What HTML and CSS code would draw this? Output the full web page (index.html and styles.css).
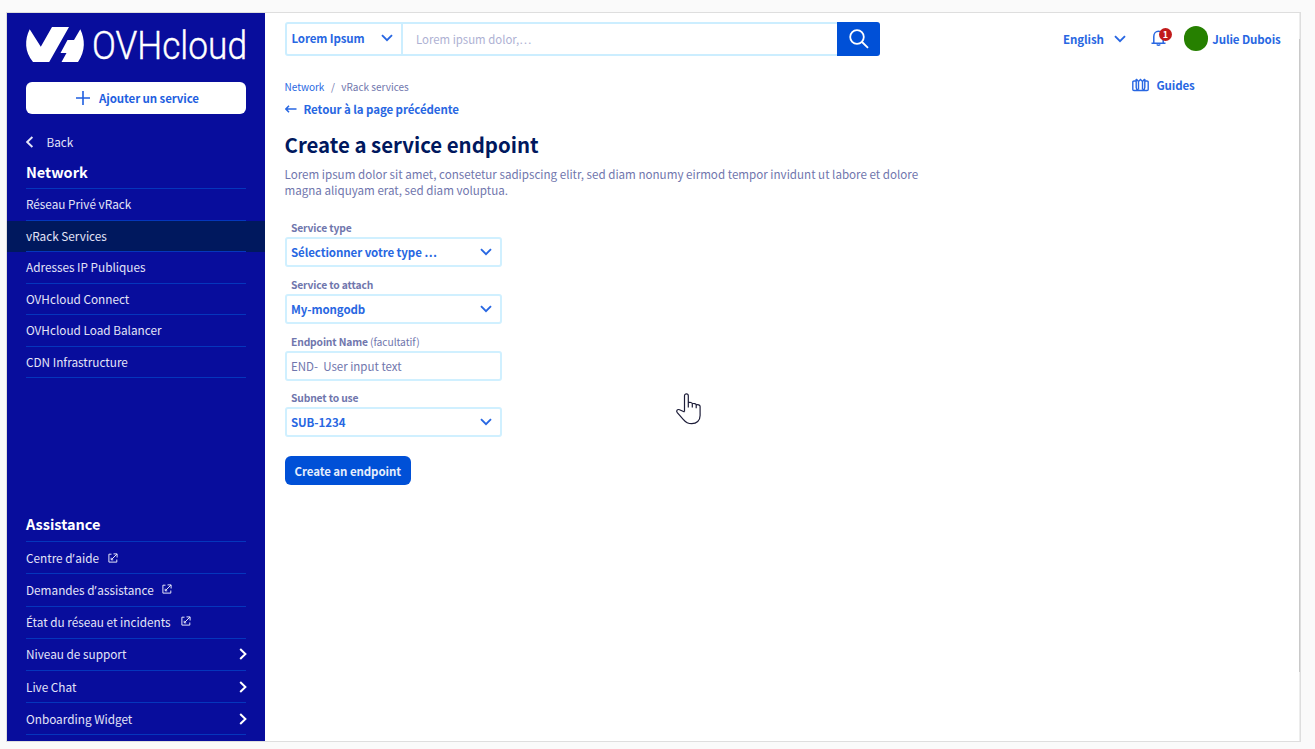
FILE: index.html
```html
<!DOCTYPE html>
<html lang="fr">
<head>
<meta charset="utf-8">
<title>OVHcloud - vRack services</title>
<link rel="stylesheet" href="styles.css">
</head>
<body>
<svg class="defs" width="0" height="0">
  <symbol id="chevron-down" viewBox="0 0 12 8"><path d="M1 1.2 6 6.2 11 1.2"/></symbol>
  <symbol id="chevron-right" viewBox="0 0 8 12"><path d="M1.2 1 6.4 6 1.2 11"/></symbol>
  <symbol id="external" viewBox="0 0 10 10"><path d="M3.500 1.200H.9v7.900h7.900V6.500M5.500 .9h3.600v3.600M9 1 3.400 6.600M3.200 4.800v2h2"/></symbol>
</svg>
<div class="frame">
  <aside class="sidebar">
    <svg class="logo" width="230" height="40" viewBox="0 0 230 40">
      <path class="mark" d="M3.700 5.300 14.800 22.800 26 3H43L23.200 38H7C-1.500 28-1.500 15.500 3.700 5.300ZM54.300 5.300C59 15 59.800 27 52 38H35.500L40.500 29H34.500L41.500 16H48Z"/>
      <text class="wordmark" x="66" y="35" textLength="155" lengthAdjust="spacingAndGlyphs">OVHcloud</text>
    </svg>
    <button class="add"><svg width="14" height="14" viewBox="0 0 14 14"><path d="M7 0v14M0 7h14"/></svg><span>Ajouter un service</span></button>
    <a class="back"><svg width="8" height="12" viewBox="0 0 8 12"><path d="M6.400 1 1.200 6l5.200 5"/></svg><span>Back</span></a>
    <h2 class="group-title">Network</h2>
    <ul class="menu">
      <li>Réseau Privé vRack</li>
      <li class="active">vRack Services</li>
      <li>Adresses IP Publiques</li>
      <li>OVHcloud Connect</li>
      <li>OVHcloud Load Balancer</li>
      <li>CDN Infrastructure</li>
    </ul>
    <h2 class="group-title assist-title">Assistance</h2>
    <ul class="menu assist">
      <li><span>Centre d<span class="apos">’</span>aide</span><svg class="ext"><use href="#external"/></svg></li>
      <li><span>Demandes d<span class="apos">’</span>assistance</span><svg class="ext raised"><use href="#external"/></svg></li>
      <li><span>État du réseau et incidents</span><svg class="ext raised wide"><use href="#external"/></svg></li>
      <li>Niveau de support<svg class="go"><use href="#chevron-right"/></svg></li>
      <li>Live Chat<svg class="go"><use href="#chevron-right"/></svg></li>
      <li>Onboarding Widget<svg class="go"><use href="#chevron-right"/></svg></li>
    </ul>
  </aside>
  <main class="main">
    <header class="topbar">
      <div class="search">
        <div class="scope"><span>Lorem Ipsum</span><svg class="down"><use href="#chevron-down"/></svg></div>
        <div class="query">Lorem ipsum dolor,…</div>
        <button class="go-search"><svg width="20" height="20" viewBox="0 0 20 20"><circle cx="8" cy="8" r="6.800"/><path d="m13 13 6 5.800"/></svg></button>
      </div>
      <div class="lang"><span>English</span><svg class="down"><use href="#chevron-down"/></svg></div>
      <div class="bell">
        <svg width="16" height="18" viewBox="0 0 16 18"><path d="M.5 14.300h14M2.800 14V7.500c0-3 2-5.200 4.700-5.200s4.700 2.200 4.700 5.200V14M5.700 15.500q1.800 1.600 3.600 0"/></svg>
        <span class="badge">1</span>
      </div>
      <div class="user"><span class="avatar"></span><span class="user-name">Julie Dubois</span></div>
    </header>
    <div class="crumb-row">
      <nav class="crumbs"><a>Network</a><span>/</span><span>vRack services</span></nav>
      <a class="guides"><svg width="17" height="14" viewBox="0 0 17 14"><path d="M4 3H2q-1.200 0-1.200 1v7.500q0 1 1.200 1h13q1.200 0 1.200-1V4q0-1-1.200-1h-2M4.200 1v8.500q0 2 2 2.500M12.800 1v8.500q0 2-2 2.500M4.200 1l2.300 2.500L8.500 1.500l2 2L12.800 1M6.500 3.500v8M10.500 3.500v8"/></svg><span>Guides</span></a>
    </div>
    <a class="return"><svg width="12" height="8" viewBox="0 0 12 8"><path d="M11.500 4H1M4 .8.900 4 4 7.200"/></svg><span>Retour à la page précédente</span></a>
    <h1>Create a service endpoint</h1>
    <p class="intro"><span>Lorem ipsum dolor sit amet, consetetur sadipscing elitr, sed diam nonumy eirmod tempor invidunt ut labore et dolore</span><br><span>magna aliquyam erat, sed diam voluptua.</span></p>
    <form class="form">
      <label>Service type</label>
      <div class="field"><span>Sélectionner votre type …</span><svg class="down"><use href="#chevron-down"/></svg></div>
      <label>Service to attach</label>
      <div class="field"><span>My-mongodb</span><svg class="down"><use href="#chevron-down"/></svg></div>
      <label>Endpoint Name <small>(facultatif)</small></label>
      <div class="field input"><span>END-&nbsp; User input text</span></div>
      <label>Subnet to use</label>
      <div class="field"><span>SUB-1234</span><svg class="down"><use href="#chevron-down"/></svg></div>
      <button type="button" class="submit">Create an endpoint</button>
    </form>
  </main>
  <div class="scroll"><div class="thumb"></div></div>
</div>
<svg class="pointer" width="28" height="34" viewBox="0 0 28 34"><path d="M10.500 19.500V3.800c0-2.600 3.800-2.600 3.800 0v11.600M14.300 10.600c1.500-.6 4-.2 4 1.300v3.600M18.300 11.800c1.400-.6 3.900-.2 3.900 1.300v3.200M22.200 13c1.500-.7 3.900-.2 3.900 1.500v9c0 5-3.500 8.200-8.300 8.200-4 0-6.300-1.600-8.600-4.400L3.300 20.700c-1.600-2.300.2-3.800 2.300-2.900l4.900 2.200"/></svg>
</body>
</html>
```
FILE: styles.css
```css
* { box-sizing: border-box; }
body {
  margin: 0;
  height: 749px;
  padding: 12px 14px 8px 6px;
  overflow: hidden;
  background: #fafafa;
  font-family: "Noto Sans CJK SC", "Noto Sans", sans-serif;
  font-size: 11.6px;
  line-height: 16px;
}
svg { fill: none; stroke: currentColor; flex: none; }
.defs { position: absolute; }
h1, h2, p, ul { margin: 0; padding: 0; }
button { font: inherit; border: 0; padding: 0; }
.frame {
  display: flex;
  height: 730px;
  border: 1px solid #dedede;
  background: #fff;
}
.sidebar {
  width: 258px;
  padding: 11px 19px 0;
  background: #080d9c;
  color: #e4e5f8;
  font-size: 11.78px;
}
.logo { display: block; overflow: visible; }
.mark { fill: #fff; stroke: none; }
.wordmark { fill: #fff; stroke: #fff; stroke-width: .4; font: 300 38px Roboto, sans-serif; }
.add {
  display: flex;
  align-items: center;
  justify-content: center;
  gap: 9px;
  width: 220px;
  height: 32px;
  margin-top: 18px;
  padding-left: 3px;
  border-radius: 6px;
  background: #fff;
  color: #1f5fe0;
  font-size: 11.5px;
  font-weight: 600;
  letter-spacing: -.1px;
}
.add svg { stroke-width: 1.6; }
.back { display: flex; align-items: center; gap: 12.5px; margin-top: 20px; }
.back svg { stroke-width: 1.9; }
.group-title { margin-top: 13px; height: 25px; line-height: 18px; font-size: 14.5px; font-weight: 700; color: #fff; }
.menu { list-style: none; border-top: 1px solid #0536bc; }
.menu li {
  display: flex;
  align-items: center;
  height: 31.55px;
  border-bottom: 1px solid #0536bc;
}
.apos { font-family: "Open Sans", sans-serif; padding-right: .8px; }
.menu .active { margin: 0 -19px; padding: 0 19px; background: #00185e; border: 0; position: relative; }
.menu .active::after { content: ""; position: absolute; left: 19px; right: 19px; bottom: 0; border-bottom: 1px solid #0536bc; }
.assist-title { margin-top: 137px; height: 26px; }
.assist li { height: 32.2px; }
.ext { width: 10px; height: 10px; margin-left: 8.5px; }
.raised { margin-top: -3px; }
.wide { margin-left: 10.5px; }
.go { width: 8px; height: 12px; margin-left: auto; margin-right: -1px; stroke-width: 2; color: #fff; }
.down { width: 12px; height: 8px; stroke-width: 1.9; }
.main { flex: 1; padding: 8.5px 18px 0 19.5px; color: #7076ad; }
.topbar { display: flex; align-items: center; height: 34px; color: #2867e2; font-size: 11.5px; font-weight: 600; letter-spacing: -.1px; }
.search { display: flex; width: 595.5px; height: 34px; }
.scope {
  display: flex;
  align-items: center;
  justify-content: space-between;
  width: 118.5px;
  padding: 0 8.5px 2px 5px;
  border: 2px solid #cceeff;
  border-radius: 3px 0 0 3px;
}
.query {
  width: 434px;
  padding: 7px 13px;
  border: solid #cceeff;
  border-width: 2px 0;
  font-size: 11.4px;
  font-weight: 400;
  letter-spacing: 0;
  color: #aeb1d3;
}
.go-search { flex: 1; padding-top: 4px; border-radius: 0 3px 3px 0; background: #0050d7; color: #fff; }
.go-search svg { stroke-width: 1.8; }
.lang { display: flex; align-items: center; gap: 10px; margin-left: 183px; }
.bell { position: relative; width: 22px; height: 20px; margin-left: 25px; }
.bell svg { stroke-width: 1.5; }
.badge {
  position: absolute;
  left: 8px;
  top: -1px;
  width: 13px;
  height: 13px;
  border-radius: 50%;
  background: #c11b1b;
  color: #fff;
  font-size: 9px;
  line-height: 13px;
  text-align: center;
}
.user { display: flex; align-items: center; gap: 4px; margin-left: 11px; white-space: nowrap; }
.avatar { width: 24.5px; height: 24.5px; border-radius: 50%; background: #268000; }
.crumb-row { display: flex; justify-content: space-between; height: 18px; margin-top: 22px; }
.crumbs { display: flex; gap: 6.5px; padding-top: 1px; font-size: 10px; }
.crumbs a { color: #2867e2; }
.guides { display: flex; align-items: center; align-self: flex-start; gap: 7px; margin: -1px 86.3px 0 0; color: #2867e2; font-size: 11.5px; font-weight: 600; letter-spacing: -.1px; }
.guides svg { stroke-width: 1.4; }
.return { display: flex; align-items: center; gap: 7px; margin-top: 5px; color: #2867e2; font-size: 11.5px; font-weight: 600; letter-spacing: -.08px; }
.return svg { stroke-width: 1.5; }
h1 { margin-top: 11.5px; font-size: 20.4px; line-height: 32px; font-weight: 700; color: #00185e; }
.intro { margin-top: 6px; line-height: 16px; white-space: nowrap; }
.form { display: flex; flex-direction: column; width: 217.5px; padding-top: 22.2px; }
label { padding-left: 6.5px; height: 17px; line-height: 15px; font-size: 10.3px; font-weight: 600; letter-spacing: -.15px; }
label small { font-size: 10.3px; font-weight: 400; letter-spacing: -.05px; }
.field {
  display: flex;
  align-items: center;
  justify-content: space-between;
  height: 30px;
  margin-bottom: 9.7px;
  padding: 0 8.5px 0 4.5px;
  border: 2px solid #d0f0ff;
  border-radius: 3px;
  color: #2867e2;
  font-size: 11.5px;
  font-weight: 600;
  letter-spacing: -.08px;
}
.input { color: #7076ad; font-weight: 400; letter-spacing: 0; }
.submit {
  width: 126.5px;
  height: 29px;
  margin-top: 9.3px;
  border-radius: 6px;
  background: #0050d7;
  color: #e6eefc;
  font-size: 11.5px;
  font-weight: 600;
  letter-spacing: -.08px;
}
.scroll { width: 1px; background: #ededed; }
.thumb { height: 633px; margin-top: 26px; background: #c9c9c9; }
.pointer { position: absolute; left: 674px; top: 392px; fill: #fff; stroke: #1c1c38; stroke-width: 1.2; }
```
